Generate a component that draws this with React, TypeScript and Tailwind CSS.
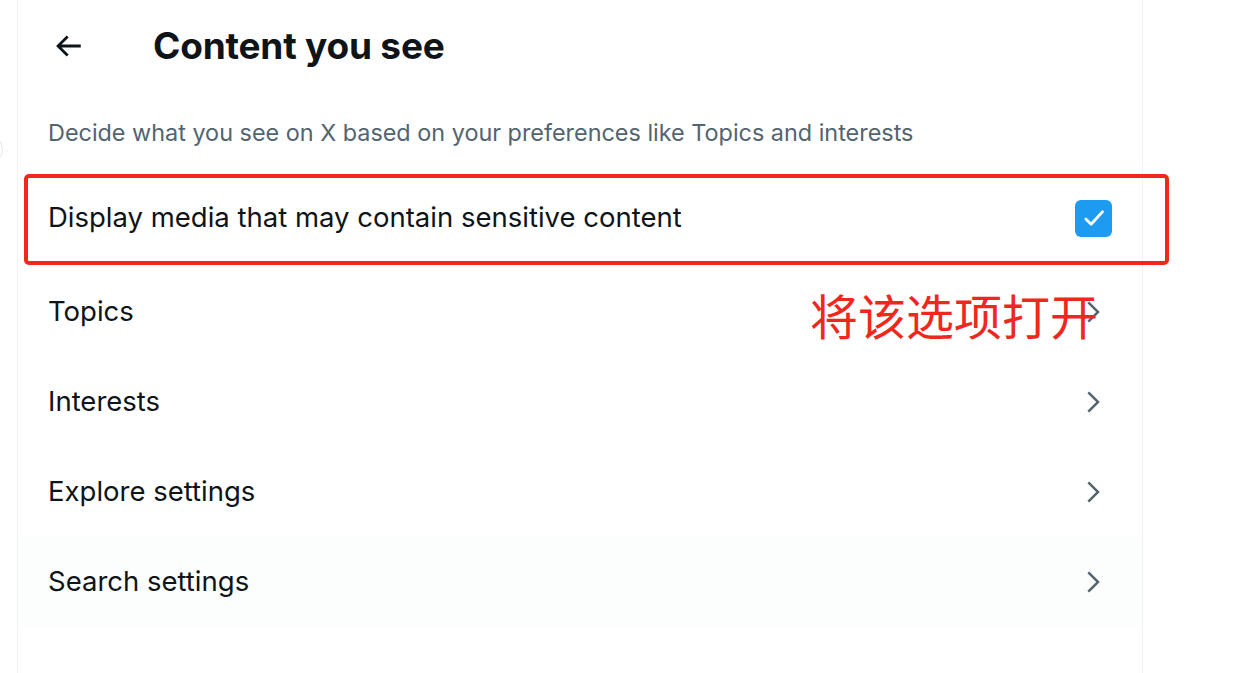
import React from "react";

const Chevron = () => (
  <svg viewBox="0 0 24 24" className="w-[30px] h-[30px] fill-[#536471]">
    <path d="M14.586 12L7.543 4.96l1.414-1.42L17.414 12l-8.457 8.46-1.414-1.42L14.586 12z" />
  </svg>
);

const Row = ({ label, hover }: { label: string; hover?: boolean }) => (
  <div className={`flex items-center justify-between h-[90px] pl-[30px] pr-[34px] ${hover ? "bg-[#fcfdfd]" : ""}`}>
    <span className="text-[27.5px] text-[#0f1419]">{label}</span>
    <Chevron />
  </div>
);

export default function App() {
  return (
    <div
      className="relative w-[1245px] h-[673px] bg-white overflow-hidden"
      style={{ fontFamily: "Inter, 'Noto Sans', sans-serif" }}
    >
      <div className="absolute left-[-28px] top-[134px] w-[31px] h-[31px] rounded-full border border-[#e1e6e8]" />
      <div className="ml-[17px] w-[1126px] h-full border-l border-r border-[#eff3f4] flex flex-col">
        <div className="h-[92px] flex items-center pl-[33px]">
          <svg viewBox="0 0 24 24" className="w-[34px] h-[34px] fill-[#0f1419]">
            <path d="M7.414 13l5.043 5.04-1.414 1.42L3.586 12l7.457-7.46 1.414 1.42L7.414 11H21v2H7.414z" />
          </svg>
          <h1 className="ml-[68px] text-[37px] font-bold text-[#0f1419] tracking-[-0.2px]">Content you see</h1>
        </div>
        <div className="h-[81px] flex items-center pl-[30px]">
          <p className="text-[23.4px] text-[#536471]">
            Decide what you see on X based on your preferences like Topics and interests
          </p>
        </div>
        <div className="flex items-center justify-between h-[90px] pl-[30px] pr-[30px]">
          <span className="text-[27.5px] text-[#0f1419]">Display media that may contain sensitive content</span>
          <div className="w-[37px] h-[37px] rounded-[6px] bg-[#1d9bf0] flex items-center justify-center">
            <svg viewBox="0 0 24 24" className="w-[30px] h-[30px]">
              <path d="M5.5 12.8l4.2 4.2L18.8 7" fill="none" stroke="white" strokeWidth="2.2" strokeLinecap="round" strokeLinejoin="round" />
            </svg>
          </div>
        </div>
        <div className="h-[4px]" />
        <Row label="Topics" />
        <Row label="Interests" />
        <Row label="Explore settings" />
        <Row label="Search settings" hover />
      </div>
      <div className="absolute left-[24px] top-[174px] w-[1145px] h-[91px] border-[4px] border-[#f0271c] rounded-[5px]" />
      <div
        className="absolute left-[810px] top-[282px] text-[48px] leading-[64px] text-[#f0271c]"
        style={{ fontFamily: "'Noto Sans CJK SC', sans-serif" }}
      >
        将该选项打开
      </div>
    </div>
  );
}
